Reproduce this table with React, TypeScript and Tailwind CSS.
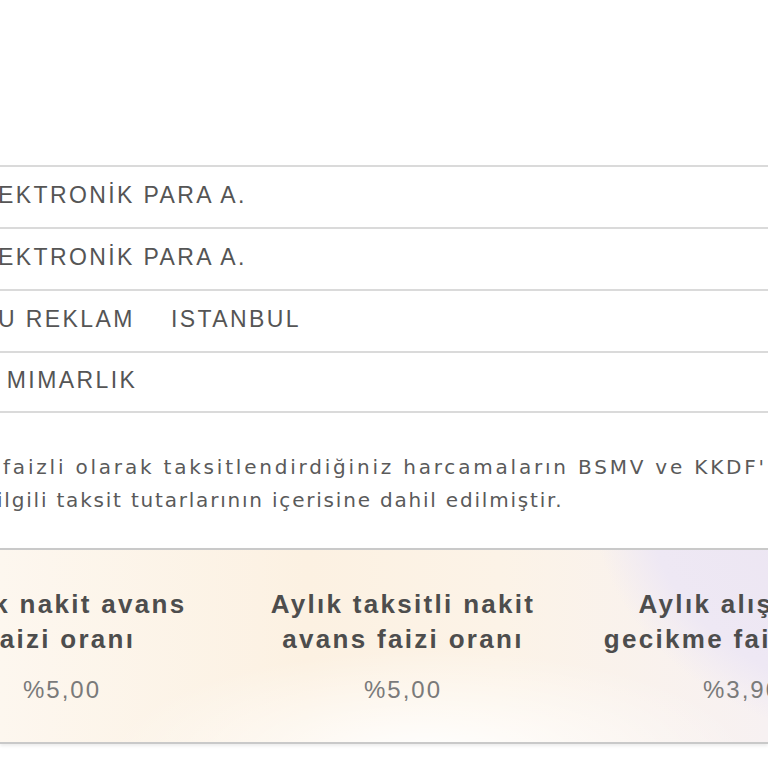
// Ekstre kesiti: işlem satırları, BSMV/KKDF notu ve faiz oranları şeridi

interface RateColumn {
  title: string[];
  value: string;
  width: string;
}

const ROWS = [
  { left: 'EKTRONİK PARA A.', right: '' },
  { left: 'EKTRONİK PARA A.', right: '' },
  { left: 'U REKLAM', right: 'ISTANBUL' },
  { left: ' MIMARLIK', right: '' },
];

const RATES: RateColumn[] = [
  { title: ['Aylık nakit avans', 'faizi oranı'], value: '%5,00', width: 'w-[330px]' },
  { title: ['Aylık taksitli nakit', 'avans faizi oranı'], value: '%5,00', width: 'w-[352px]' },
  { title: ['Aylık alışveriş', 'gecikme faizi oranı'], value: '%3,90', width: 'w-[326px]' },
];

export default function App() {
  return (
    <div className="w-[768px] h-[768px] overflow-hidden bg-white font-['Liberation_Sans',Arial,sans-serif]">
      {/* transaction rows */}
      <div className="pt-[165px]">
        {ROWS.map((row, i) => (
          <div
            key={i}
            className={`h-[62px] border-t-2 border-[#dadada] flex items-center pb-1 text-[23px] tracking-[2.4px] text-[#555555] whitespace-pre ${
              i === ROWS.length - 1 ? 'border-b-2' : ''
            }`}
          >
            <span className="w-[173px] shrink-0 -ml-[2px]">{row.left}</span>
            <span>{row.right}</span>
          </div>
        ))}
      </div>

      {/* note */}
      <div className="pt-[38px] pb-[31px] font-['DejaVu_Sans',Verdana,sans-serif] text-[20px] leading-[33px] text-[#5a5a5a] whitespace-nowrap">
        <div className="pl-[3px] tracking-[2.8px]">faizli olarak taksitlendirdiğiniz harcamaların BSMV ve KKDF'</div>
        <div className="-ml-[3px] tracking-[1.8px]">ilgili taksit tutarlarının içerisine dahil edilmiştir.</div>
      </div>

      {/* rates band */}
      <div className="border-t-2 border-b-2 border-[#c9c9c9] shadow-[0_2px_3px_rgba(0,0,0,0.08)] bg-[radial-gradient(ellipse_310px_254px_at_900px_-60px,#ebe4f1_0%,#eee8f4_82%,rgba(240,234,245,0)_100%),radial-gradient(ellipse_320px_110px_at_430px_210px,#ffffff_0%,rgba(255,255,255,0)_100%),linear-gradient(90deg,#fdf7ef_0%,#fcf1e2_40%,#fcf3e7_65%,#f7f1f2_100%)]">
        <div className="flex -ml-[103px] pt-[37px] pb-[37px]">
          {RATES.map((col, i) => (
            <div key={i} className={`${col.width} shrink-0 text-center`}>
              <div className="text-[26px] leading-[35px] font-bold tracking-[2.3px] text-[#4d4d4d] whitespace-nowrap">
                {col.title[0]}
                <br />
                {col.title[1]}
              </div>
              <div className="mt-[18px] text-[24px] leading-[30px] tracking-[2px] text-[#7a7a7a]">
                {col.value}
              </div>
            </div>
          ))}
        </div>
      </div>
    </div>
  );
}
